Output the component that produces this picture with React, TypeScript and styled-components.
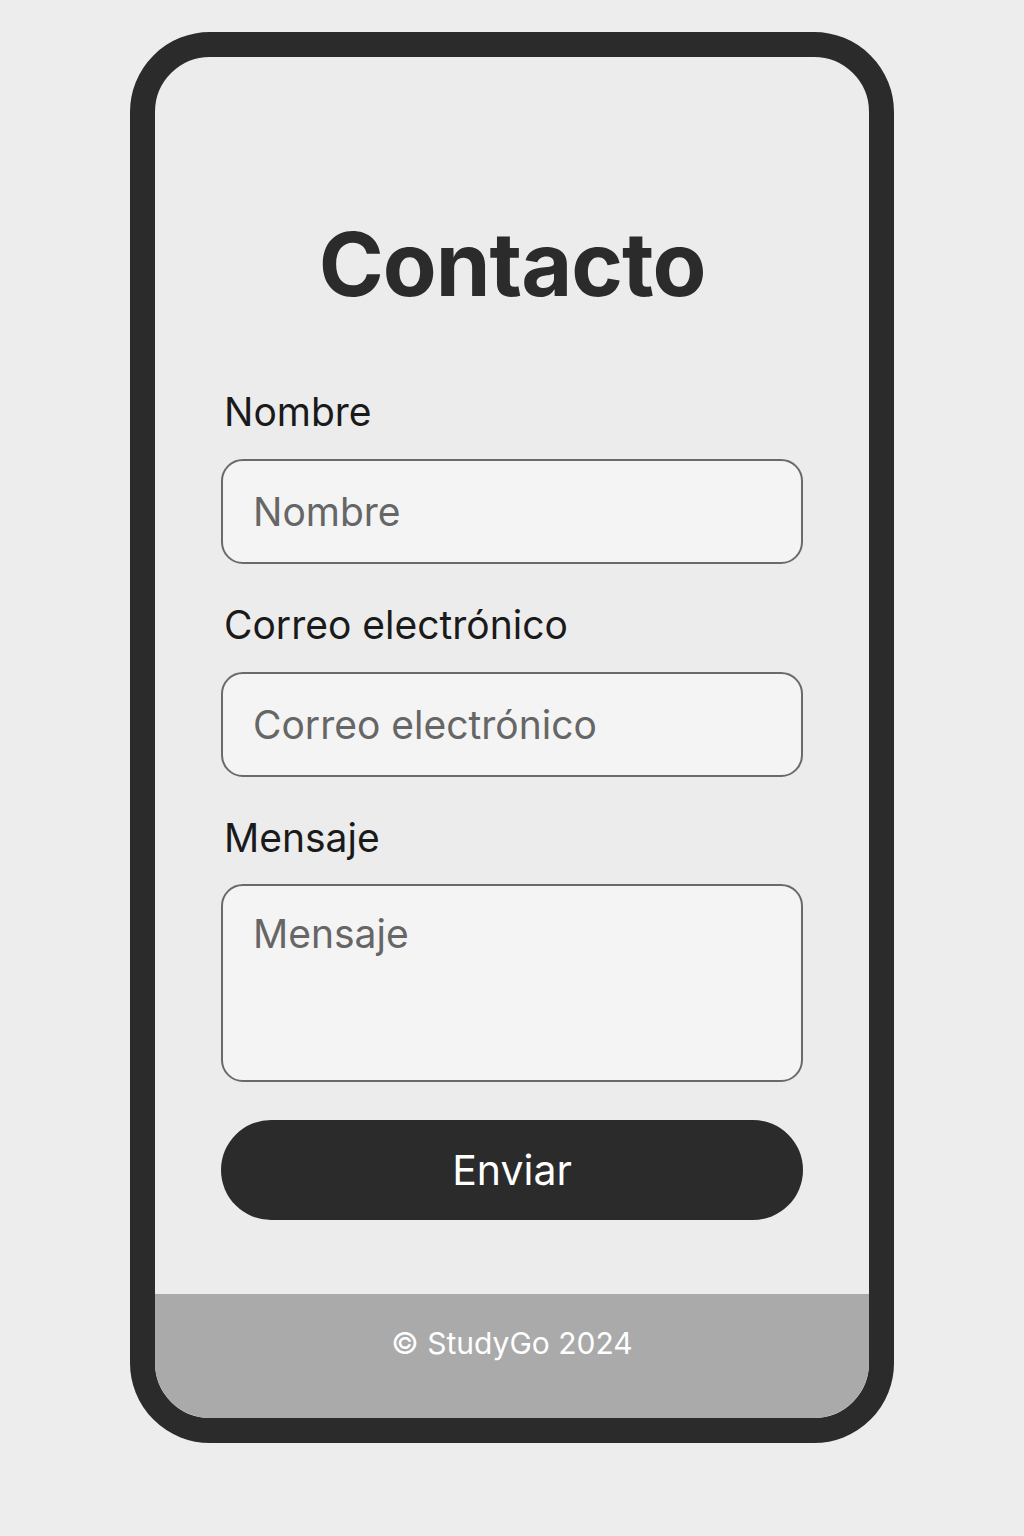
import React from "react";
import styled, { createGlobalStyle } from "styled-components";

const GlobalStyle = createGlobalStyle`
  html, body {
    margin: 0;
    padding: 0;
    background: #ededed;
  }
  body {
    font-family: Inter, "Noto Sans", "Liberation Sans", sans-serif;
  }
  * { box-sizing: border-box; }
`;

const Page = styled.div`
  display: flex;
  justify-content: center;
  padding-top: 32px;
  min-height: 1536px;
  background: #ededed;
`;

const Phone = styled.div`
  width: 764px;
  height: 1411px;
  border: 25px solid #2b2b2b;
  border-radius: 80px;
  background: #ececec;
  overflow: hidden;
  display: flex;
  flex-direction: column;
`;

const Content = styled.form`
  display: flex;
  flex-direction: column;
  padding: 163px 66px 0 66px;
  flex: 1;
`;

const Title = styled.h1`
  margin: 0 0 81px 0;
  font-size: 88px;
  line-height: 1;
  font-weight: 700;
  letter-spacing: -1px;
  color: #2b2b2b;
  text-align: center;
`;

const Field = styled.div`
  display: flex;
  flex-direction: column;
  gap: 23px;
  margin-bottom: 38px;
`;

const Label = styled.label`
  font-size: 39px;
  line-height: 1.2;
  color: #1a1a1a;
  padding-left: 3px;
`;

const inputBase = `
  width: 100%;
  border: 2px solid #6a6a6a;
  border-radius: 22px;
  background: #f4f4f4;
  font-family: Inter, "Noto Sans", "Liberation Sans", sans-serif;
  font-size: 39px;
  line-height: 1.2;
  color: #333;
  outline: none;
  &::placeholder { color: #666666; opacity: 1; }
`;

const Input = styled.input`
  ${inputBase}
  height: 105px;
  padding: 0 30px;
`;

const TextArea = styled.textarea`
  ${inputBase}
  height: 198px;
  padding: 25px 30px;
  resize: none;
`;

const Button = styled.button`
  height: 100px;
  width: 100%;
  border: none;
  border-radius: 50px;
  background: #2b2b2b;
  color: #ffffff;
  font-family: Inter, "Noto Sans", "Liberation Sans", sans-serif;
  font-size: 41px;
  font-weight: 400;
  cursor: pointer;
`;

const Footer = styled.footer`
  height: 124px;
  background: #aaaaaa;
  color: #ffffff;
  font-size: 30px;
  line-height: 1.2;
  text-align: center;
  padding-top: 31px;
`;

export default function App() {
  return (
    <>
      <GlobalStyle />
      <Page>
        <Phone>
          <Content onSubmit={(e) => e.preventDefault()}>
            <Title>Contacto</Title>
            <Field>
              <Label htmlFor="nombre">Nombre</Label>
              <Input id="nombre" type="text" placeholder="Nombre" />
            </Field>
            <Field>
              <Label htmlFor="correo">Correo electrónico</Label>
              <Input id="correo" type="email" placeholder="Correo electrónico" />
            </Field>
            <Field>
              <Label htmlFor="mensaje">Mensaje</Label>
              <TextArea id="mensaje" placeholder="Mensaje" />
            </Field>
            <Button type="submit">Enviar</Button>
          </Content>
          <Footer>© StudyGo 2024</Footer>
        </Phone>
      </Page>
    </>
  );
}
